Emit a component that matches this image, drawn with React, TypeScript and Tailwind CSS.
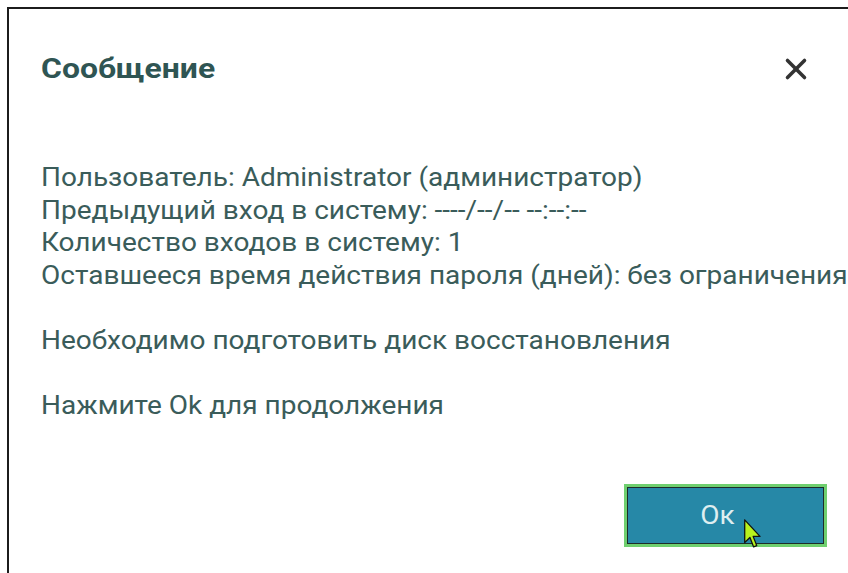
import { X } from 'lucide-react';

const lines = [
  'Пользователь: Administrator (администратор)',
  'Предыдущий вход в систему: ----/--/-- --:--:--',
  'Количество входов в систему: 1',
  'Оставшееся время действия пароля (дней): без ограничения',
];

function Pointer() {
  return (
    <svg width="17" height="30" viewBox="0 0 12 21" className="absolute left-[117px] top-[32px]">
      <path
        d="M0.5 0.5 L0.5 16.5 L4.2 13 L6.8 19.6 L9 18.7 L6.5 12.2 L11.3 12.2 Z"
        fill="#b8f21e"
        stroke="#111"
        strokeWidth="0.9"
        strokeLinejoin="round"
      />
    </svg>
  );
}

export default function App() {
  return (
    <div className="w-[848px] h-[573px] bg-white pl-[7px] pt-[7px] overflow-hidden font-['Roboto',sans-serif]">
      <div className="h-full border-l-2 border-t-2 border-[#1c1c1c] flex flex-col">
        <div className="flex items-center justify-between pl-[32px] pr-[35px] pt-[43px]">
          <h1 className="text-[28px] leading-[32px] font-bold origin-left scale-x-[1.14] text-[#2f5553]">Сообщение</h1>
          <X size={34} strokeWidth={2.5} className="text-[#333]" />
        </div>

        <div className="pl-[32px] mt-[76px] text-[25px] leading-[32.5px] text-[#3a5c5a] whitespace-nowrap">
          <div className="origin-left scale-x-[1.12]">
            {lines.map(l => (
              <div key={l}>{l}</div>
            ))}
            <div className="mt-[32.5px]">Необходимо подготовить диск восстановления</div>
            <div className="mt-[32.5px]">Нажмите Ok для продолжения</div>
          </div>
        </div>

        <div className="flex justify-end pr-[21px] mt-[62px]">
          <button className="relative w-[203px] h-[63px] border-[3px] border-[#6fcf6f]">
            <div className="w-full h-full border border-[#1d2b2b] bg-[#2688a7] flex items-center justify-center pr-[16px] text-[25px] text-[#dfeef0]">
              <span className="scale-x-[1.12]">Ок</span>
            </div>
            <Pointer />
          </button>
        </div>
      </div>
    </div>
  );
}
